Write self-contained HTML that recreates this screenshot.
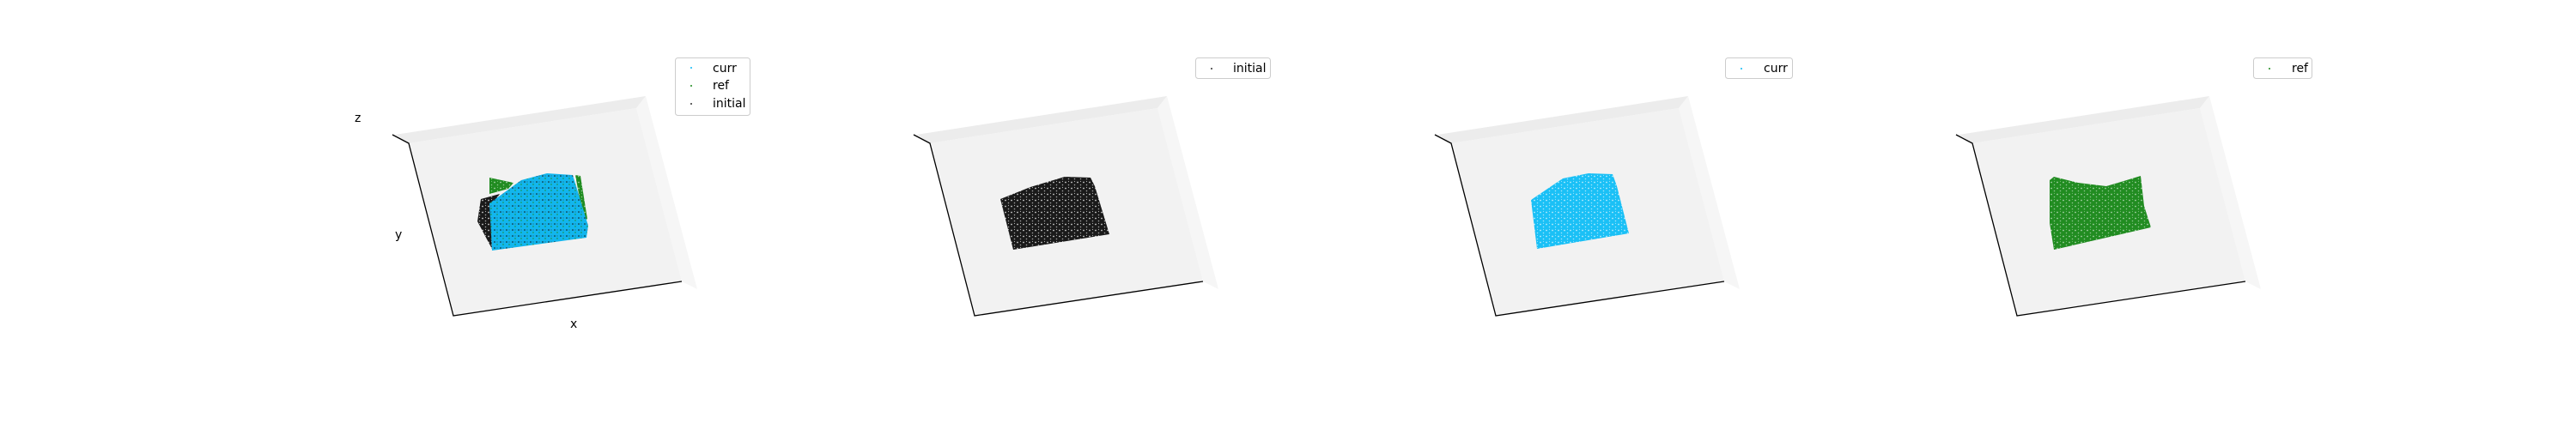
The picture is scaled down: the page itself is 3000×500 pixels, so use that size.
<!DOCTYPE html>
<html><head><meta charset="utf-8"><style>
html,body{margin:0;padding:0;background:#fff;width:3000px;height:500px;overflow:hidden}
svg text{font-family:"DejaVu Sans","Liberation Sans",sans-serif;font-size:14px;fill:#000}
</style></head><body>
<svg width="3000" height="500" xmlns="http://www.w3.org/2000/svg">
<defs>
<pattern id="pk" width="7" height="7" patternUnits="userSpaceOnUse">
<rect width="7" height="7" fill="#1a1a1a"/>
<circle cx="2" cy="2.5" r="0.9" fill="#fff" opacity="0.8"/><circle cx="5.5" cy="5.5" r="0.8" fill="#fff" opacity="0.6"/><circle cx="5.5" cy="1.5" r="0.6" fill="#aaa"/>
</pattern>
<pattern id="pb" width="7" height="7" patternUnits="userSpaceOnUse">
<rect width="7" height="7" fill="#1ac0f6"/>
<circle cx="2" cy="2.5" r="0.9" fill="#fff" opacity="0.7"/><circle cx="5.5" cy="5.5" r="0.8" fill="#fff" opacity="0.6"/><circle cx="5.5" cy="1.5" r="0.6" fill="#8fdcfa"/>
</pattern>
<pattern id="pg" width="7" height="7" patternUnits="userSpaceOnUse">
<rect width="7" height="7" fill="#218c21"/>
<circle cx="2" cy="2.5" r="0.9" fill="#fff" opacity="0.6"/><circle cx="5.5" cy="5.5" r="0.8" fill="#fff" opacity="0.5"/><circle cx="5.5" cy="1.5" r="0.6" fill="#6ab86a"/>
</pattern>
<pattern id="pm" width="7" height="7" patternUnits="userSpaceOnUse">
<rect width="7" height="7" fill="#12b6ee"/>
<circle cx="2" cy="2" r="0.8" fill="#111"/><circle cx="5" cy="5" r="0.7" fill="#1d8a1d"/><circle cx="5" cy="2" r="0.5" fill="#333"/>
</pattern>
<g id="box">
<polygon points="460,157 752,112 741,126 476,167" fill="#ececec"/>
<polygon points="752,112 812,337 794,328 741,126" fill="#f6f6f6"/>
<polygon points="476,167 741,126 794,328 528,368" fill="#f2f2f2"/>
<polyline points="457,157 476,167 528,368 794,328" fill="none" stroke="#000" stroke-width="1.3"/>
</g>
</defs>

<!-- Panel 1 -->
<use href="#box"/>
<text x="413" y="142">z</text>
<text x="460" y="278">y</text>
<text x="664" y="382">x</text>
<polygon points="570,207 598,213 592,220 570,226" fill="url(#pg)"/>
<polygon points="670,204 676,205 684,255 680,258" fill="url(#pg)"/>
<polygon points="560,232 582,226 572,240 574,292 556,258" fill="url(#pk)"/>
<polygon points="570,237 607,210 637,202 667,204 685,263 683,277 573,292" fill="url(#pm)"/>
<rect x="786.5" y="67.5" width="87" height="67" rx="3" fill="#fff" stroke="#ccc"/>
<circle cx="805" cy="79" r="1" fill="#0cbaf5"/><circle cx="805" cy="100" r="1" fill="#1d8a1d"/><circle cx="805" cy="121" r="1" fill="#333"/>
<text x="830" y="84">curr</text><text x="830" y="104">ref</text><text x="830" y="125">initial</text>

<!-- Panel 2 -->
<g transform="translate(607,0)"><use href="#box"/></g>
<polygon points="1165,232 1200,218 1240,206 1270,207 1275,217 1292,273 1180,291" fill="url(#pk)"/>
<rect x="1392.5" y="67.5" width="87" height="24" rx="3" fill="#fff" stroke="#ccc"/>
<circle cx="1411" cy="80" r="1" fill="#333"/>
<text x="1436" y="84">initial</text>

<!-- Panel 3 -->
<g transform="translate(1214,0)"><use href="#box"/></g>
<polygon points="1783,233 1820,208 1850,202 1878,203 1883,217 1897,272 1790,290" fill="url(#pb)"/>
<rect x="2009.5" y="67.5" width="78" height="24" rx="3" fill="#fff" stroke="#ccc"/>
<circle cx="2028" cy="80" r="1" fill="#0cbaf5"/>
<text x="2054" y="84">curr</text>

<!-- Panel 4 -->
<g transform="translate(1821,0)"><use href="#box"/></g>
<polygon points="2387,210 2392,206 2420,213 2453,217 2470,212 2493,205 2497,240 2505,265 2392,291 2387,260" fill="url(#pg)"/>
<rect x="2624.5" y="67.5" width="68" height="24" rx="3" fill="#fff" stroke="#ccc"/>
<circle cx="2643" cy="80" r="1" fill="#1d8a1d"/>
<text x="2669" y="84">ref</text>
</svg>
</body></html>
